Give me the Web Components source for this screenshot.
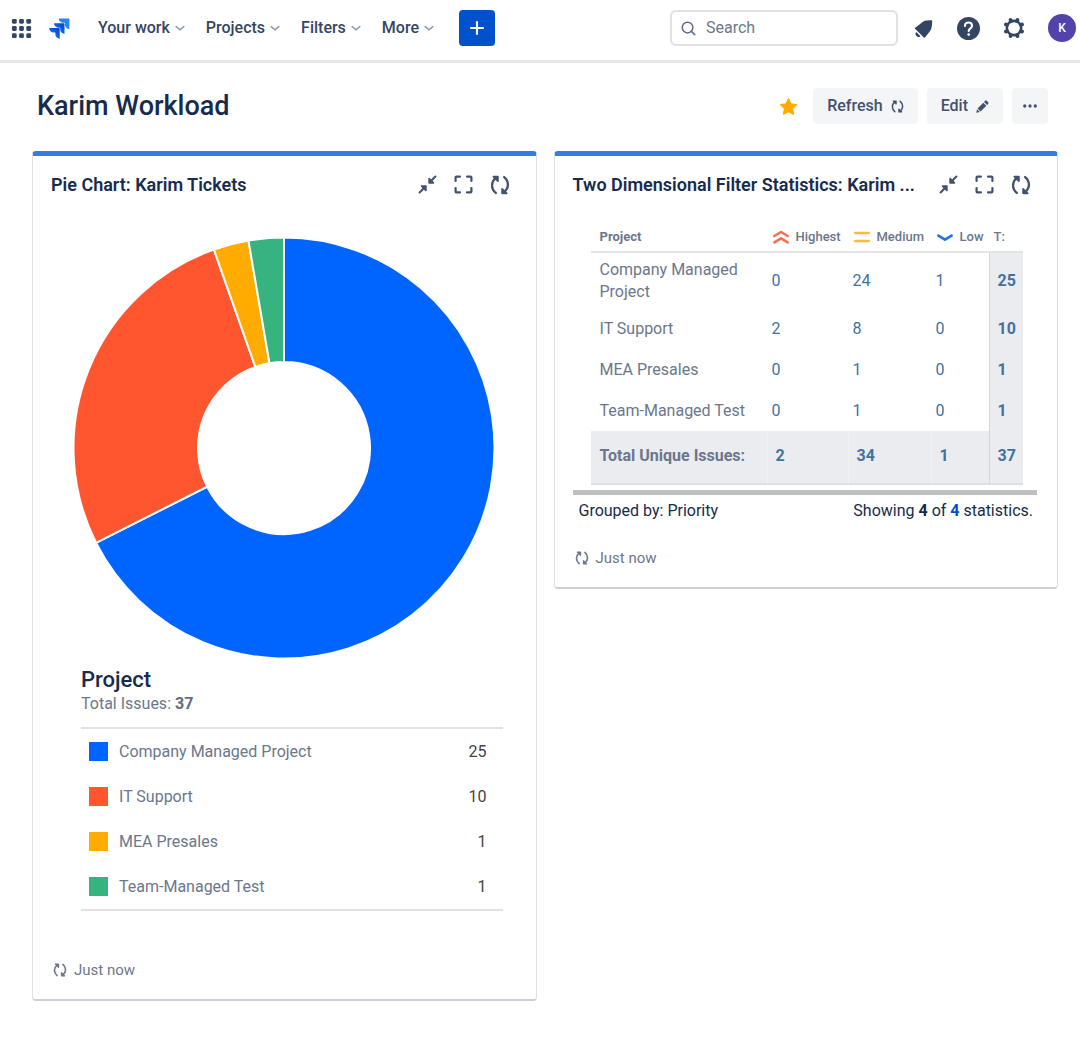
<!DOCTYPE html>
<html lang="en">
<head>
<meta charset="utf-8">
<meta name="viewport" content="width=device-width, initial-scale=1">
<title>Karim Workload</title>
<style>
  body { margin: 0; background: #fff; color: #172b4d; font: 16px/22px Roboto, "Liberation Sans", sans-serif; }
</style>
</head>
<body>
<dash-app></dash-app>
<script>
const ICONS = {
  apps: '<g fill="currentColor"><rect x="2" y="2" width="5" height="5" rx="1.5"/><rect x="9.500" y="2" width="5" height="5" rx="1.5"/><rect x="17" y="2" width="5" height="5" rx="1.5"/><rect x="2" y="9.500" width="5" height="5" rx="1.5"/><rect x="9.500" y="9.500" width="5" height="5" rx="1.5"/><rect x="17" y="9.500" width="5" height="5" rx="1.5"/><rect x="2" y="17" width="5" height="5" rx="1.5"/><rect x="9.500" y="17" width="5" height="5" rx="1.5"/><rect x="17" y="17" width="5" height="5" rx="1.5"/></g>',
  logo: '<defs><linearGradient id="g" x1="1" y1="0" x2="0" y2="1"><stop offset=".2" stop-color="#0052cc"/><stop offset="1" stop-color="#2684ff"/></linearGradient></defs><path fill="#2684ff" d="M22.500 1.500H11.800a4.800 4.800 0 0 0 4.800 4.800h1.900v1.900a4.800 4.800 0 0 0 4.800 4.800V2.300a.8.8 0 0 0-.8-.8z"/><path fill="url(#g)" d="M17.200 6.800H6.500a4.800 4.800 0 0 0 4.800 4.800h2v1.900a4.800 4.800 0 0 0 4.700 4.800V7.600a.8.8 0 0 0-.8-.8z"/><path fill="url(#g)" d="M12 12.100H1.300A4.800 4.800 0 0 0 6.100 16.900H8v1.900a4.800 4.800 0 0 0 4.800 4.800V12.900a.8.8 0 0 0-.8-.8z"/>',
  chevron: '<path d="M3 8.500l9 8 9-8" fill="none" stroke="currentColor" stroke-width="4" stroke-linecap="round" stroke-linejoin="round"/>',
  plus: '<path d="M12 3v18M3 12h18" stroke="currentColor" stroke-width="3.200" stroke-linecap="round"/>',
  search: '<circle cx="10.500" cy="10.500" r="8.500" fill="none" stroke="currentColor" stroke-width="2.400"/><path d="M16.500 16.500l5.500 5.500" stroke="currentColor" stroke-width="2.600" stroke-linecap="round"/>',
  bell: '<path fill="currentColor" d="M20.500 2.500c1 0 1.600.6 1.500 1.600l-.5 5.400c-.2 2.600-1.100 4.300-2.800 6.400l-4.800 6c-.5.700-1.200.700-1.800.1L2.600 12.600c-.6-.6-.5-1.400.3-1.800l5.600-4.100C11 4.200 12.800 3.100 15.200 2.800zM3.800 16l4.800 4.800a3.400 3.400 0 0 1-4.800-4.800z"/>',
  help: '<circle cx="12" cy="12" r="12" fill="currentColor"/><path d="M8.300 9.500c0-2.300 1.600-3.700 3.700-3.700s3.700 1.400 3.700 3.400c0 2.700-3.500 2.600-3.500 5.500" fill="none" stroke="#fff" stroke-width="2.200" stroke-linecap="round"/><circle cx="12.200" cy="18.300" r="1.400" fill="#fff"/>',
  gear: '<circle cx="12" cy="12" r="7.800" fill="none" stroke="currentColor" stroke-width="2.800"/><g fill="none" stroke="currentColor" stroke-width="4" stroke-linecap="round"><path d="M8.200 3.200l.4 1M15.800 3.200l-.4 1M8.200 20.800l.4-1M15.800 20.800l-.4-1M3.200 8.200l1 .4M3.200 15.800l1-.4M20.800 8.200l-1 .4M20.800 15.800l-1-.4"/></g>',
  star: '<path fill="currentColor" stroke="currentColor" stroke-width="2" stroke-linejoin="round" d="M12 2.500l3 6.300 6.800.9-5 4.800 1.300 6.900-6.100-3.400-6.100 3.400 1.300-6.900-5-4.800 6.800-.9z"/>',
  refresh: '<g fill="none" stroke="currentColor" stroke-width="2.800" stroke-linecap="round" stroke-linejoin="round"><path d="M7 21.500C3.800 18.800 2.500 16 2.500 12.500 2.500 9 4 6 7 3.500M17 2.500c3.200 2.700 4.500 5.500 4.500 9 0 3.500-1.500 6.500-4.500 9"/><path fill="currentColor" stroke-width="2" d="M4 2h5.500v5.500zM20 22h-5.500v-5.500z"/></g>',
  edit: '<path fill="currentColor" d="M14.800 3.600l5.600 5.600 2-2c.9-.9.9-2.300 0-3.200l-2.400-2.400c-.9-.9-2.300-.9-3.200 0zM13.500 4.900l5.600 5.600L8.400 21.200l-5.600-5.600zM2 17l5 5-5.500 1.400c-.6.200-1-.300-.9-.9z"/>',
  more: '<g fill="currentColor"><circle cx="3" cy="12" r="2.800"/><circle cx="12" cy="12" r="2.800"/><circle cx="21" cy="12" r="2.800"/></g>',
  shrink: '<g fill="none" stroke="currentColor" stroke-width="2.600" stroke-linecap="round" stroke-linejoin="round"><path d="M22 2l-6 6M2 22l6-6"/><path fill="currentColor" stroke-width="2" d="M14 4.500V10h5.500zM4.500 14H10v5.500z"/></g>',
  full: '<path d="M2 7.500V3.200Q2 2 3.200 2H7.500M16.500 2h4.300Q22 2 22 3.200V7.500M22 16.500v4.300q0 1.200-1.200 1.200H16.500M7.500 22H3.200Q2 22 2 20.800V16.500" fill="none" stroke="currentColor" stroke-width="2.800" stroke-linecap="round"/>',
  highest: '<path d="M2 10.500l10-6 10 6M2 20l10-6 10 6" fill="none" stroke="#f4704f" stroke-width="3.800" stroke-linecap="round" stroke-linejoin="round"/>',
  medium: '<path d="M2 6h20M2 18h20" stroke="#f5bb45" stroke-width="4" stroke-linecap="round"/>',
  low: '<path d="M2 10l10 6 10-6" fill="none" stroke="#2270e8" stroke-width="3.800" stroke-linecap="round" stroke-linejoin="round"/>'
};

class UiIcon extends HTMLElement {
  connectedCallback() {
    const s = this.getAttribute('size') || 20;
    this.attachShadow({ mode: 'open' }).innerHTML =
      `<style>:host{display:inline-flex;flex:none}svg{display:block;overflow:visible}</style>
       <svg width="${s}" height="${s}" viewBox="0 0 24 24" aria-hidden="true">${ICONS[this.getAttribute('name')]}</svg>`;
  }
}

class NavItem extends HTMLElement {
  connectedCallback() {
    this.attachShadow({ mode: 'open' }).innerHTML = `
      <style>
        :host { display: flex; }
        button { display: flex; align-items: center; gap: 5px; padding: 0; border: 0; background: none;
          font: 500 16px/22px Roboto, sans-serif; color: #344563; white-space: nowrap; cursor: pointer; }
        ui-icon { color: #97a0af; }
      </style>
      <button type="button" aria-haspopup="true"><slot></slot><ui-icon name="chevron" size="10"></ui-icon></button>`;
  }
}

class TopBar extends HTMLElement {
  connectedCallback() {
    this.attachShadow({ mode: 'open' }).innerHTML = `
      <style>
        :host { display: block; }
        header { display: flex; align-items: center; height: 56px; padding: 0 4px 4px 10px;
          border-bottom: 3px solid #e6e8ec; color: #344563; }
        button { display: flex; align-items: center; justify-content: center; padding: 0; border: 0; background: none; color: inherit; cursor: pointer; }
        .logo { display: flex; margin: 0 28px 0 15px; }
        nav { display: flex; gap: 21px; }
        .create { width: 36px; height: 36px; margin-left: 25px; border-radius: 4px; background: #0052cc; color: #fff; }
        .search { display: flex; align-items: center; gap: 10px; box-sizing: border-box; width: 228px; height: 36px; margin-left: auto;
          padding: 0 9px; border: 2px solid #dfe1e6; border-radius: 6px; color: #5e6c84; }
        input { flex: 1; min-width: 0; padding: 0; border: 0; outline: 0; background: none; font: 16px/22px Roboto, sans-serif; color: #344563; }
        input::placeholder { color: #6b778c; opacity: 1; }
        .tools { display: flex; align-items: center; gap: 23px; margin-left: 15px; }
        .avatar { width: 28px; height: 28px; border-radius: 50%; background: #5243aa; color: #fff; font: 500 12px/16px Roboto, sans-serif; }
      </style>
      <header>
        <button type="button" aria-label="Switch to"><ui-icon name="apps" size="23"></ui-icon></button>
        <a class="logo" href="#" aria-label="Jira"><ui-icon name="logo" size="22"></ui-icon></a>
        <nav>
          <nav-item>Your work</nav-item><nav-item>Projects</nav-item><nav-item>Filters</nav-item><nav-item>More</nav-item>
        </nav>
        <button class="create" type="button" aria-label="Create"><ui-icon name="plus" size="16"></ui-icon></button>
        <label class="search"><ui-icon name="search" size="15"></ui-icon><input type="search" placeholder="Search" aria-label="Search"></label>
        <div class="tools">
          <button type="button" aria-label="Notifications"><ui-icon name="bell" size="21"></ui-icon></button>
          <button type="button" aria-label="Help"><ui-icon name="help" size="23"></ui-icon></button>
          <button type="button" aria-label="Settings"><ui-icon name="gear" size="22"></ui-icon></button>
          <button class="avatar" type="button" aria-label="Profile">K</button>
        </div>
      </header>`;
  }
}

class PageHead extends HTMLElement {
  connectedCallback() {
    this.attachShadow({ mode: 'open' }).innerHTML = `
      <style>
        :host { display: flex; align-items: center; justify-content: space-between; padding: 25px 32px 27px 37px; }
        h1 { margin: 0; font: 500 27px/36px Roboto, sans-serif; color: #172b4d; }
        .actions { display: flex; align-items: center; gap: 9px; }
        button { display: flex; align-items: center; justify-content: center; gap: 8px; height: 36px; padding: 0 14px; border: 0; border-radius: 4px;
          background: #f4f5f7; color: #42526e; font: 500 16px/22px Roboto, sans-serif; cursor: pointer; }
        .star { padding: 0 6px; background: none; color: #ffab00; }
        .more { padding: 0 11px; }
      </style>
      <h1><slot></slot></h1>
      <div class="actions">
        <button class="star" type="button" aria-label="Starred"><ui-icon name="star" size="19"></ui-icon></button>
        <button type="button">Refresh <ui-icon name="refresh" size="13"></ui-icon></button>
        <button type="button">Edit <ui-icon name="edit" size="13"></ui-icon></button>
        <button class="more" type="button" aria-label="More actions"><ui-icon name="more" size="14"></ui-icon></button>
      </div>`;
  }
}

class GadgetCard extends HTMLElement {
  connectedCallback() {
    this.attachShadow({ mode: 'open' }).innerHTML = `
      <style>
        :host { display: block; box-sizing: border-box; min-width: 0; border: 1px solid #dfe1e6; border-top: 5px solid #357de0;
          border-bottom: 2px solid #cdd0d6; border-radius: 4px; background: #fff; }
        header { display: flex; align-items: center; justify-content: space-between; gap: 20px; padding: 17px 26px 17px 18px; }
        h2 { margin: 0; min-width: 0; font: 600 18px/24px Roboto, sans-serif; color: #172b4d; }
        .tools { display: flex; gap: 17px; flex: none; }
        button { display: flex; padding: 0; border: 0; background: none; color: #42526e; cursor: pointer; }
        footer { display: flex; align-items: center; gap: 7px; padding: 0 20px 18px; color: #6b778c; font-size: 15px; }
      </style>
      <header>
        <h2>${this.getAttribute('heading')}</h2>
        <div class="tools">
          <button type="button" aria-label="Minimize"><ui-icon name="shrink" size="19"></ui-icon></button>
          <button type="button" aria-label="Maximize"><ui-icon name="full" size="19"></ui-icon></button>
          <button type="button" aria-label="Refresh"><ui-icon name="refresh" size="20"></ui-icon></button>
        </div>
      </header>
      <slot></slot>
      <footer><ui-icon name="refresh" size="14"></ui-icon><span>Just now</span></footer>`;
  }
}

const PROJECTS = [
  { name: 'Company Managed Project', color: '#0065ff', n: [0, 24, 1], total: 25 },
  { name: 'IT Support', color: '#ff5630', n: [2, 8, 0], total: 10 },
  { name: 'MEA Presales', color: '#ffab00', n: [0, 1, 0], total: 1 },
  { name: 'Team-Managed Test', color: '#36b37e', n: [0, 1, 0], total: 1 }
];

class PieGadget extends HTMLElement {
  connectedCallback() {
    const sum = PROJECTS.reduce((a, p) => a + p.total, 0);
    const pt = (r, f) => `${(211 + r * Math.sin(f * 2 * Math.PI)).toFixed(2)} ${(211 - r * Math.cos(f * 2 * Math.PI)).toFixed(2)}`;
    let at = 0;
    const slices = PROJECTS.map(p => {
      const a = at / sum, b = (at += p.total) / sum, big = b - a > .5 ? 1 : 0;
      return `<path fill="${p.color}" d="M${pt(210.5, a)}A210.5 210.5 0 ${big} 1 ${pt(210.5, b)}L${pt(86, b)}A86 86 0 ${big} 0 ${pt(86, a)}Z"/>`;
    }).join('');
    this.attachShadow({ mode: 'open' }).innerHTML = `
      <style>
        :host { display: block; padding: 23px 33px 48px 40px; }
        svg { display: block; width: 100%; max-width: 422px; }
        .info { padding: 0 0 0 8px; }
        h3 { margin: 8px 0 0; font: 500 22px/26px Roboto, sans-serif; color: #172b4d; }
        p { margin: 0 0 12px; color: #6b778c; }
        b { color: #5e6c84; }
        table { width: 100%; border-collapse: collapse; border: solid #e1e3e6; border-width: 2px 0; }
        th, td { height: 45px; padding: 0; }
        th { text-align: left; font-weight: 400; }
        td { padding-right: 16px; text-align: right; color: #444; }
        a { display: flex; align-items: center; gap: 11px; padding-left: 8px; color: #6b778c; text-decoration: none; }
        i { width: 19px; height: 19px; }
      </style>
      <svg viewBox="0 0 422 422" role="img" aria-label="Issues by project"><g stroke="#fff" stroke-width="2">${slices}</g></svg>
      <div class="info">
        <h3>Project</h3>
        <p>Total Issues: <b>${sum}</b></p>
        <table>${PROJECTS.map(p => `<tr><th scope="row"><a href="#"><i style="background:${p.color}"></i>${p.name}</a></th><td>${p.total}</td></tr>`).join('')}</table>
      </div>`;
  }
}

class StatsGadget extends HTMLElement {
  connectedCallback() {
    this.attachShadow({ mode: 'open' }).innerHTML = `
      <style>
        :host { display: block; padding: 0 20px 25px 18px; }
        .wrap { padding: 9px 14px 5px 18px; border-bottom: 5px solid #bfbfbf; }
        table { width: 100%; border-collapse: separate; border-spacing: 0; table-layout: fixed; }
        col:nth-child(1) { width: 176px; } col:nth-child(2) { width: 81px; } col:nth-child(3) { width: 83px; } col:nth-child(4) { width: 58px; }
        th, td { box-sizing: border-box; padding: 0 0 0 5px; text-align: left; color: #6b778c; font-weight: 400; }
        thead th { height: 30px; border-bottom: 2px solid #e3e4e8; font: 500 13px/18px Roboto, sans-serif; white-space: nowrap; }
        thead span { display: flex; align-items: center; gap: 7px; padding-left: 1px; }
        th:first-child { padding-left: 9px; }
        thead th:first-child { font-weight: 700; }
        tbody th, tbody td { height: 41px; }
        tbody tr:first-child > * { height: 55px; }
        a { color: #42729f; text-decoration: none; }
        tbody td:last-child, tfoot td:last-child { padding-left: 8px; border-left: 1px solid #d3d5da; background: #ebecf0; font-weight: 700; }
        tfoot th, tfoot td { height: 54px; padding-left: 9px; padding-bottom: 2px; border-bottom: 2px solid #dddfe3; background: #ebecf0; font-weight: 700; }
        tfoot td { border-left: 1px solid #f0f1f4; padding-left: 8px; }
        .note { display: flex; justify-content: space-between; padding: 5px 4px 0 6px; color: #172b4d; }
        .note a { color: #0052cc; }
      </style>
      <div class="wrap">
        <table>
          <colgroup><col><col><col><col><col></colgroup>
          <thead><tr><th scope="col">Project</th>
            <th scope="col"><span><ui-icon name="highest" size="16"></ui-icon>Highest</span></th>
            <th scope="col"><span><ui-icon name="medium" size="16"></ui-icon>Medium</span></th>
            <th scope="col"><span><ui-icon name="low" size="16"></ui-icon>Low</span></th>
            <th scope="col">T:</th></tr></thead>
          <tbody>${PROJECTS.map(p => `<tr><th scope="row">${p.name}</th>${[...p.n, p.total].map(v => `<td><a href="#">${v}</a></td>`).join('')}</tr>`).join('')}</tbody>
          <tfoot><tr><th scope="row">Total Unique Issues:</th>${[2, 34, 1, 37].map(v => `<td><a href="#">${v}</a></td>`).join('')}</tr></tfoot>
        </table>
      </div>
      <div class="note"><span>Grouped by: Priority</span><span>Showing <b>4</b> of <a href="#"><b>4</b></a> statistics.</span></div>`;
  }
}

class DashApp extends HTMLElement {
  connectedCallback() {
    this.attachShadow({ mode: 'open' }).innerHTML = `
      <style>
        :host { display: block; }
        .board { display: grid; grid-template-columns: minmax(0, 1fr) minmax(0, 1fr); align-items: start; gap: 17px; padding: 0 22px 44px 32px; }
      </style>
      <top-bar></top-bar>
      <main>
        <page-head>Karim Workload</page-head>
        <div class="board">
          <gadget-card heading="Pie Chart: Karim Tickets"><pie-gadget></pie-gadget></gadget-card>
          <gadget-card heading="Two Dimensional Filter Statistics: Karim ..."><stats-gadget></stats-gadget></gadget-card>
        </div>
      </main>`;
  }
}

customElements.define('ui-icon', UiIcon);
customElements.define('nav-item', NavItem);
customElements.define('top-bar', TopBar);
customElements.define('page-head', PageHead);
customElements.define('gadget-card', GadgetCard);
customElements.define('pie-gadget', PieGadget);
customElements.define('stats-gadget', StatsGadget);
customElements.define('dash-app', DashApp);
</script>
</body>
</html>
